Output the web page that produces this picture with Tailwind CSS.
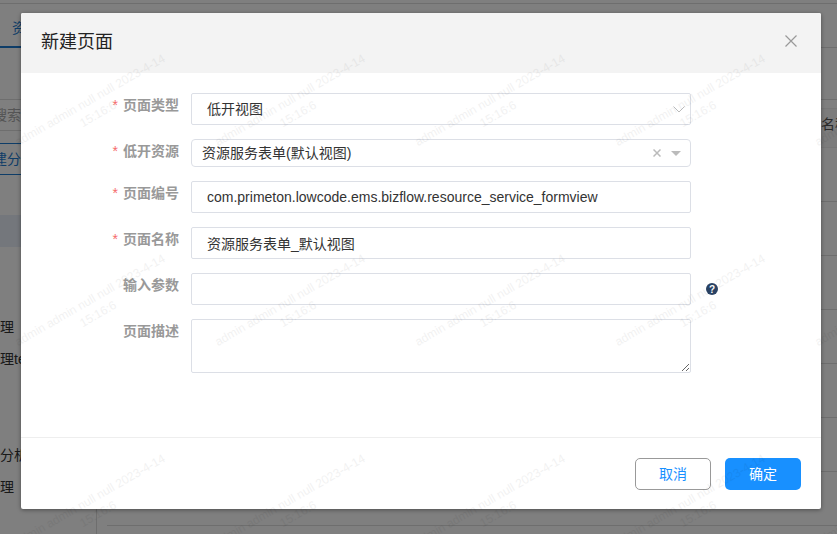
<!doctype html>
<html lang="zh">
<head>
<meta charset="utf-8">
<script src="https://cdn.jsdelivr.net/npm/@tailwindcss/browser@4"></script>
</head>
<body class="m-0 h-[534px] w-[837px] overflow-hidden bg-white font-['Liberation_Sans','Noto_Sans_CJK_SC',sans-serif]">
<div class="relative h-[534px] w-[837px] overflow-hidden bg-white">
  <!-- page behind the dialog -->
  <div class="flex h-full flex-col text-[14px] text-[#333]">
    <div class="h-[4px] shrink-0 border-b border-[#ddd]"></div>
    <div class="flex h-[44px] shrink-0 items-end border-b border-[#ddd]">
      <span class="-mb-px h-[33px] w-[21px] overflow-hidden whitespace-nowrap border-b-2 border-[#1d7ad0] pl-3 leading-[26px] text-[#1d7ad0]">资源</span>
    </div>
    <div class="flex min-h-0 flex-1">
      <div class="w-[97px] shrink-0 border-r border-[#ddd]">
        <div class="mt-[51px] h-[32px] w-full overflow-hidden whitespace-nowrap border-y border-[#ddd] leading-[30px] text-[#aaa]"><span class="-ml-[7px] block">搜索</span></div>
        <div class="mt-[12px] h-[32px] overflow-hidden whitespace-nowrap border-y border-[#1d7ad0] leading-[30px] text-[#1d7ad0]"><span class="-ml-[7px] block">建分级</span></div>
        <div class="mt-[40px] h-[32px] bg-[#e8eef8]"></div>
        <div class="mt-[64px] leading-[32px]">理</div>
        <div class="leading-[32px]">理test</div>
        <div class="mt-[64px] leading-[32px]">分析</div>
        <div class="leading-[32px]">理</div>
      </div>
      <div class="min-w-0 flex-1 pl-[10px]">
        <div class="mt-[51px] border-t border-[#ddd]"></div>
        <div class="mt-[8px] flex h-[40px] items-center justify-end border-y border-[#eee] bg-[#f8f8f8] pb-2 text-[#555]"><span class="w-[16px] overflow-hidden whitespace-nowrap">名称</span></div>
        <div class="mt-[53px] border-t border-[#ddd]"></div>
        <div class="mt-[53px] border-t border-[#ddd]"></div>
        <div class="mt-[53px] border-t border-[#ddd]"></div>
        <div class="mt-[53px] border-t border-[#ddd]"></div>
        <div class="mt-[53px] border-t border-[#ddd]"></div>
        <div class="mt-[53px] border-t border-[#ddd]"></div>
        <div class="mt-[53px] border-t border-[#ddd]"></div>
      </div>
    </div>
  </div>

  <!-- mask -->
  <div class="absolute inset-0 bg-black/50"></div>

  <!-- dialog -->
  <div class="absolute left-[21px] top-[13px] flex h-[496px] w-[800px] flex-col overflow-hidden rounded-[2px] bg-white shadow-[0_1px_4px_rgba(0,0,0,0.4)]">
    <div class="flex h-[60px] shrink-0 items-center justify-between bg-[#f3f3f3] pl-5 pr-6">
      <h2 class="pb-[2px] text-[18px] font-normal text-[#222]">新建页面</h2>
      <svg class="-mt-[5px] h-[12px] w-[12px]" viewBox="0 0 12 12" fill="none" stroke="#999" stroke-width="1.2"><path d="M0.5 0.5 L11.5 11.5 M11.5 0.5 L0.5 11.5"/></svg>
    </div>
    <form class="flex flex-1 flex-col gap-[14px] pl-[170px] pt-5 text-[14px]">
      <div class="flex h-[32px]">
        <label class="-ml-[170px] flex w-[170px] shrink-0 justify-end gap-[5px] pr-3 leading-[24px] font-bold text-[#999]"><span class="font-normal text-[#f56c6c]">*</span>页面类型</label>
        <div class="flex h-[32px] w-[500px] items-center justify-between rounded-[2px] border border-[#dcdfe6] pl-[15px] pr-[5px] text-[#333]">低开视图<svg class="h-[7px] w-[12px]" viewBox="0 0 12 7" fill="none" stroke="#bbb" stroke-width="1"><path d="M0.5 0.5 L6 6 L11.5 0.5"/></svg></div>
      </div>
      <div class="flex h-[28px]">
        <label class="-ml-[170px] flex w-[170px] shrink-0 justify-end gap-[5px] pr-3 leading-[24px] font-bold text-[#999]"><span class="font-normal text-[#f56c6c]">*</span>低开资源</label>
        <div class="flex h-[28px] w-[500px] items-center justify-between rounded-[4px] border border-[#dcdfe6] pl-[10px] pr-[9px] text-[#333]">资源服务表单(默认视图)
          <span class="flex items-center gap-[10px]">
            <svg class="h-[8px] w-[8px]" viewBox="0 0 8 8" fill="none" stroke="#bbb" stroke-width="1.5"><path d="M0.5 0.5 L7.5 7.5 M7.5 0.5 L0.5 7.5"/></svg>
            <svg class="h-[5px] w-[10px]" viewBox="0 0 10 5" fill="#bbb"><path d="M0 0 H10 L5 5 Z"/></svg>
          </span>
        </div>
      </div>
      <div class="flex h-[32px]">
        <label class="-ml-[170px] flex w-[170px] shrink-0 justify-end gap-[5px] pr-3 leading-[24px] font-bold text-[#999]"><span class="font-normal text-[#f56c6c]">*</span>页面编号</label>
        <input class="h-[32px] w-[500px] rounded-[2px] border border-[#dcdfe6] px-[15px] text-[#333]" value="com.primeton.lowcode.ems.bizflow.resource_service_formview">
      </div>
      <div class="flex h-[32px]">
        <label class="-ml-[170px] flex w-[170px] shrink-0 justify-end gap-[5px] pr-3 leading-[24px] font-bold text-[#999]"><span class="font-normal text-[#f56c6c]">*</span>页面名称</label>
        <input class="h-[32px] w-[500px] rounded-[2px] border border-[#dcdfe6] px-[15px] text-[#333]" value="资源服务表单_默认视图">
      </div>
      <div class="flex h-[32px] items-start">
        <label class="-ml-[170px] flex w-[170px] shrink-0 justify-end pr-3 leading-[24px] font-bold text-[#999]">输入参数</label>
        <input class="h-[32px] w-[500px] rounded-[2px] border border-[#dcdfe6] px-[15px] text-[#333]">
        <svg class="ml-[15px] mt-[10px] h-[12px] w-[12px]" viewBox="0 0 12 12"><circle cx="6" cy="6" r="6" fill="#2a4365"/><text x="6" y="9.5" text-anchor="middle" font-size="10" font-weight="700" fill="#fff" font-family="Liberation Sans">?</text></svg>
      </div>
      <div class="flex h-[54px]">
        <label class="-ml-[170px] flex w-[170px] shrink-0 justify-end pr-3 leading-[24px] font-bold text-[#999]">页面描述</label>
        <textarea class="h-[54px] w-[500px] rounded-[2px] border border-[#dcdfe6] px-[15px]"></textarea>
      </div>
    </form>
    <div class="flex h-[72px] shrink-0 items-start justify-end gap-[14px] border-t border-[#eee] pr-5 pt-5 text-[14px]">
      <button class="h-[32px] w-[76px] rounded-[5px] border border-[#999] text-[#1890ff]">取消</button>
      <button class="h-[32px] w-[76px] rounded-[5px] bg-[#1890ff] text-white">确定</button>
    </div>
  </div>

  <!-- watermark tiles -->
  <div class="pointer-events-none absolute left-[-6px] top-[47px] grid w-[1000px] grid-cols-[repeat(5,200px)] auto-rows-[200px] text-center text-[12px] leading-[16px] whitespace-nowrap text-black opacity-[0.05]">
    <div class="flex h-[120px] w-[200px] -rotate-30 flex-col items-center justify-center"><span>admin admin null null 2023-4-14</span><span>15:16:6</span></div>
    <div class="flex h-[120px] w-[200px] -rotate-30 flex-col items-center justify-center"><span>admin admin null null 2023-4-14</span><span>15:16:6</span></div>
    <div class="flex h-[120px] w-[200px] -rotate-30 flex-col items-center justify-center"><span>admin admin null null 2023-4-14</span><span>15:16:6</span></div>
    <div class="flex h-[120px] w-[200px] -rotate-30 flex-col items-center justify-center"><span>admin admin null null 2023-4-14</span><span>15:16:6</span></div>
    <div class="flex h-[120px] w-[200px] -rotate-30 flex-col items-center justify-center"><span>admin admin null null 2023-4-14</span><span>15:16:6</span></div>
    <div class="flex h-[120px] w-[200px] -rotate-30 flex-col items-center justify-center"><span>admin admin null null 2023-4-14</span><span>15:16:6</span></div>
    <div class="flex h-[120px] w-[200px] -rotate-30 flex-col items-center justify-center"><span>admin admin null null 2023-4-14</span><span>15:16:6</span></div>
    <div class="flex h-[120px] w-[200px] -rotate-30 flex-col items-center justify-center"><span>admin admin null null 2023-4-14</span><span>15:16:6</span></div>
    <div class="flex h-[120px] w-[200px] -rotate-30 flex-col items-center justify-center"><span>admin admin null null 2023-4-14</span><span>15:16:6</span></div>
    <div class="flex h-[120px] w-[200px] -rotate-30 flex-col items-center justify-center"><span>admin admin null null 2023-4-14</span><span>15:16:6</span></div>
    <div class="flex h-[120px] w-[200px] -rotate-30 flex-col items-center justify-center"><span>admin admin null null 2023-4-14</span><span>15:16:6</span></div>
    <div class="flex h-[120px] w-[200px] -rotate-30 flex-col items-center justify-center"><span>admin admin null null 2023-4-14</span><span>15:16:6</span></div>
    <div class="flex h-[120px] w-[200px] -rotate-30 flex-col items-center justify-center"><span>admin admin null null 2023-4-14</span><span>15:16:6</span></div>
    <div class="flex h-[120px] w-[200px] -rotate-30 flex-col items-center justify-center"><span>admin admin null null 2023-4-14</span><span>15:16:6</span></div>
    <div class="flex h-[120px] w-[200px] -rotate-30 flex-col items-center justify-center"><span>admin admin null null 2023-4-14</span><span>15:16:6</span></div>
  </div>
</div>
</body>
</html>
